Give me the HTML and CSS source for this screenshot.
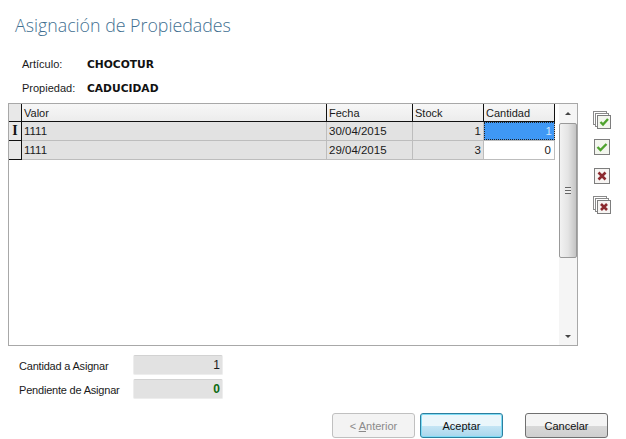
FILE: index.html
```html
<!DOCTYPE html>
<html lang="es">
<head>
  <meta charset="UTF-8" />
  <title>Asignación de Propiedades</title>
  <link rel="stylesheet" href="styles.css">
</head>
<body>
  <h1>Asignación de Propiedades</h1>

  <div class="info">
    <div class="info-row"><span class="info-label">Artículo:</span><b>CHOCOTUR</b></div>
    <div class="info-row"><span class="info-label">Propiedad:</span><b>CADUCIDAD</b></div>
  </div>

  <div class="middle">
    <div class="grid">
      <div class="rows">
        <div class="row head">
          <div class="ind"></div>
          <div class="cell valor">Valor</div>
          <div class="cell fecha">Fecha</div>
          <div class="cell stock">Stock</div>
          <div class="cell cant">Cantidad</div>
        </div>
        <div class="row">
          <div class="ind"><span class="cursor">I</span></div>
          <div class="cell valor">1111</div>
          <div class="cell fecha">30/04/2015</div>
          <div class="cell stock num">1</div>
          <div class="cell cant num selected">1</div>
        </div>
        <div class="row">
          <div class="ind"></div>
          <div class="cell valor">1111</div>
          <div class="cell fecha">29/04/2015</div>
          <div class="cell stock num">3</div>
          <div class="cell cant num edit">0</div>
        </div>
      </div>
      <div class="scrollbar">
        <div class="arrow up"></div>
        <div class="thumb"><div class="grip"></div></div>
        <div class="track"></div>
        <div class="arrow down"></div>
      </div>
    </div>

    <div class="tools">
      <svg class="tool check-all" viewBox="0 0 18 18" width="18" height="18">
        <rect x="0.5" y="0.5" width="13" height="13" fill="#fff" stroke="#8a8a8a"/>
        <rect x="2.5" y="2.5" width="13" height="13" fill="#fff" stroke="#8a8a8a"/>
        <rect x="4.5" y="4.5" width="13" height="13" fill="#f3f6ee" stroke="#7d7d7d"/>
        <path d="M7.5 11 L10 13.5 L15 8" fill="none" stroke="#4fa32e" stroke-width="2.4"/>
      </svg>
      <svg class="tool check-one" viewBox="0 0 16 16" width="16" height="16">
        <rect x="0.5" y="0.5" width="15" height="15" fill="#f3f6ee" stroke="#7d7d7d"/>
        <path d="M3.5 8 L6.5 11 L12.5 5" fill="none" stroke="#4fa32e" stroke-width="2.4"/>
      </svg>
      <svg class="tool" viewBox="0 0 16 16" width="16" height="16">
        <rect x="0.5" y="0.5" width="15" height="15" fill="#f7f5f3" stroke="#7d7d7d"/>
        <path d="M4.5 4.5 L11.5 11.5 M11.5 4.5 L4.5 11.5" fill="none" stroke="#8c2a2f" stroke-width="2.6"/>
      </svg>
      <svg class="tool" viewBox="0 0 18 18" width="18" height="18">
        <rect x="0.5" y="0.5" width="13" height="13" fill="#fff" stroke="#8a8a8a"/>
        <rect x="2.5" y="2.5" width="13" height="13" fill="#fff" stroke="#8a8a8a"/>
        <rect x="4.5" y="4.5" width="13" height="13" fill="#f7f5f3" stroke="#7d7d7d"/>
        <path d="M8 8 L14 14 M14 8 L8 14" fill="none" stroke="#8c2a2f" stroke-width="2.6"/>
      </svg>
    </div>
  </div>

  <div class="totals">
    <div class="total-row"><span class="total-label">Cantidad a Asignar</span><div class="total-box">1</div></div>
    <div class="total-row"><span class="total-label">Pendiente de Asignar</span><div class="total-box green">0</div></div>
  </div>

  <div class="buttons">
    <button class="btn disabled">&lt; <u>A</u>nterior</button>
    <button class="btn primary">Aceptar</button>
    <button class="btn cancel">Cancelar</button>
  </div>
</body>
</html>
```

FILE: styles.css
```css
html, body {
  margin: 0;
  height: 100%;
}
body {
  width: 626px;
  height: 439px;
  overflow: hidden;
  background-color: #fff;
  color: #1a1a1a;
  font-family: "Liberation Sans", Arial, sans-serif;
  font-size: 11px;
  box-sizing: border-box;
  padding-top: 13px;
}
h1 {
  margin: 0 0 0 15px;
  font-family: "Open Sans", sans-serif;
  font-weight: 300;
  font-size: 17.8px;
  line-height: 24px;
  color: #3f6f91;
}
.info {
  margin: 15px 0 0 22px;
}
.info-row {
  display: flex;
  align-items: center;
  height: 24px;
}
.info-label {
  width: 65px;
}
.info-row b {
  font-family: "DejaVu Sans", sans-serif;
  font-size: 10.7px;
  color: #111;
}
.middle {
  display: flex;
  margin: 3px 0 0 8px;
}
.grid {
  display: flex;
  justify-content: space-between;
  width: 570px;
  height: 243px;
  box-sizing: border-box;
  border: 1px solid #a8a8a8;
}
.rows {
  width: 546px;
}
.row {
  display: flex;
  height: 18px;
  border-bottom: 1px solid #bdbdbd;
}
.row.head {
  height: 17px;
  border-bottom: 1px solid #111;
  background: linear-gradient(#f7f7f7, #ececec);
}
.ind {
  width: 12px;
  background: #e8e8e8;
  border-right: 1px solid #111;
  border-bottom: 1px solid #111;
  margin-bottom: -1px;
  text-align: center;
  line-height: 18px;
}
.cursor {
  font-family: "Liberation Serif", serif;
  font-weight: bold;
  font-size: 14px;
  color: #111;
}
.cell {
  box-sizing: border-box;
  padding: 0 2px;
  line-height: 18px;
  font-size: 11.5px;
  background: #e2e2e2;
  border-right: 1px solid #bdbdbd;
}
.head .cell {
  background: none;
  font-size: 11px;
  line-height: 19px;
  border-right: 1px solid #111;
}
.valor { width: 305px; }
.fecha { width: 86px; }
.stock { width: 71px; }
.cant { width: 71px; }
.num { text-align: right; }
.selected {
  background: #3f98f5;
  color: #cfe6fb;
  outline: 1px dotted #222;
  outline-offset: -1px;
}
.edit {
  background: #fff;
  padding-right: 3px;
}
.scrollbar {
  width: 18px;
  display: flex;
  flex-direction: column;
  background: #f5f5f5;
}
.arrow {
  height: 17px;
  display: flex;
  align-items: center;
  justify-content: center;
}
.arrow.up {
  height: 19px;
}
.arrow::after {
  content: "";
  border-left: 3px solid transparent;
  border-right: 3px solid transparent;
}
.up::after { border-bottom: 3px solid #444; }
.down::after { border-top: 3px solid #444; }
.thumb {
  height: 135px;
  box-sizing: border-box;
  border: 1px solid #999;
  border-radius: 2px;
  background: linear-gradient(to right, #f2f2f2, #e4e4e4 50%, #c4c4c4);
  display: flex;
  align-items: center;
  justify-content: center;
}
.grip {
  width: 6px;
  height: 5px;
  border-top: 1px solid #666;
  border-bottom: 1px solid #666;
  background: linear-gradient(#eee 40%, #666 40%, #666 60%, #eee 60%);
}
.track {
  flex: 1;
}
.tools {
  display: flex;
  flex-direction: column;
  align-items: center;
  gap: 12px;
  margin: 8px 0 0 15px;
  width: 18px;
}
.tool {
  display: block;
}
.check-all {
  margin-bottom: -2px;
}
.check-one {
  margin-bottom: 1px;
}
.totals {
  margin: 9px 0 0 19px;
  display: flex;
  flex-direction: column;
  gap: 4px;
}
.total-row {
  display: flex;
  align-items: center;
}
.total-label {
  width: 114px;
  padding-top: 2px;
  letter-spacing: -0.2px;
}
.total-box {
  width: 90px;
  height: 20px;
  box-sizing: border-box;
  padding-right: 2px;
  border: 1px solid #ededed;
  border-top-color: #d2d2d2;
  border-radius: 2px;
  background: #e2e2e2;
  text-align: right;
  line-height: 18px;
  font-size: 12px;
}
.green {
  color: #0c6b12;
  font-weight: bold;
}
.buttons {
  display: flex;
  margin: 14px 0 0 332px;
}
.btn {
  height: 25px;
  width: 83px;
  padding: 0;
  font-family: inherit;
  font-size: 11px;
  color: #111;
  border: 1px solid #707070;
  border-radius: 3px;
  background: linear-gradient(#f4f4f4 50%, #d9d9d9 50%, #cfcfcf);
}
.disabled {
  color: #8a8a8a;
  border-color: #c0c0c0;
  background: #f3f3f3;
}
.primary {
  margin-left: 5px;
  border-color: #2c7f9f;
  box-shadow: inset 0 0 0 1px #7fdcf5;
  background: linear-gradient(#eaf6fb 50%, #c6e6f5 50%, #a9d6ec);
}
.cancel {
  margin-left: 22px;
}
```
